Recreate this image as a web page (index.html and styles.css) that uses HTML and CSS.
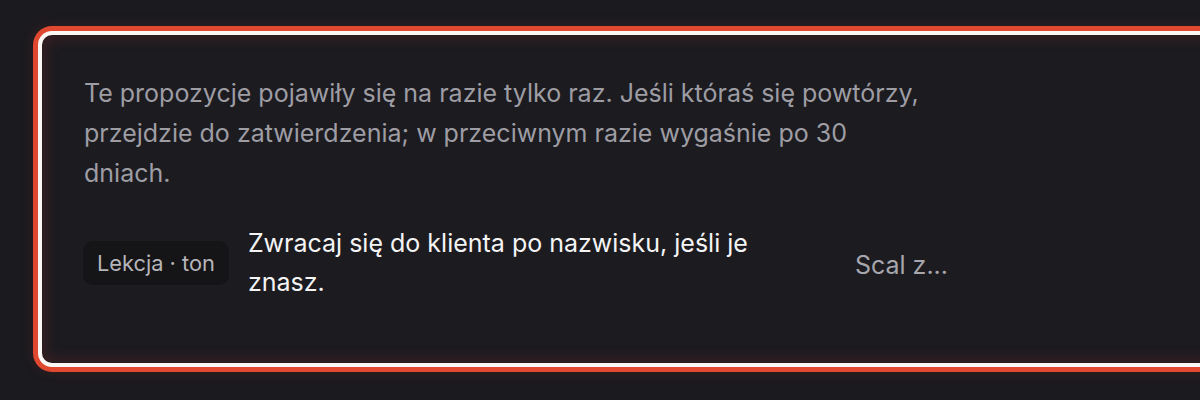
FILE: index.html
```html
<!DOCTYPE html>
<html lang="pl">
<head>
<meta charset="utf-8">
<title>Propozycje</title>
<link rel="stylesheet" href="styles.css">
</head>
<body>
<div class="page">
  <section class="card">
    <p class="intro">Te propozycje pojawiły się na razie tylko raz. Jeśli któraś się powtórzy, przejdzie do zatwierdzenia; w przeciwnym razie wygaśnie po 30 dniach.</p>
    <div class="row">
      <span class="badge">Lekcja · ton</span>
      <span class="lesson">Zwracaj się do klienta po nazwisku, jeśli je znasz.</span>
      <span class="merge">Scal z...</span>
    </div>
  </section>
</div>
</body>
</html>
```
FILE: styles.css
```css
html, body {
  margin: 0;
  padding: 0;
  background: #1b1a1f;
  overflow: hidden;
  width: 1200px;
  height: 400px;
}
body {
  font-family: Inter, "Noto Sans", sans-serif;
}
.page {
  padding: 36px 0 0 43px;
}
.card {
  box-sizing: border-box;
  width: 1220px;
  height: 326px;
  background: #1c1b20;
  border-radius: 9px;
  padding: 37px 40px 0 41px;
  box-shadow:
    0 0 0 1px #2a1a1a,
    0 0 0 5px #fbf7f5,
    0 0 0 10px #e0482f,
    0 0 14px 10px rgba(224, 72, 47, 0.12),
    inset 0 0 14px 2px rgba(120, 40, 40, 0.35);
}
.intro {
  margin: 0;
  max-width: 840px;
  font-size: 25px;
  line-height: 40px;
  color: #9e9da4;
}
.row {
  margin-top: 31px;
  display: flex;
  align-items: center;
}
.badge {
  flex: none;
  background: #151417;
  color: #b6b5ba;
  font-size: 21.8px;
  line-height: 44px;
  padding: 0 14px;
  border-radius: 10px;
  margin-left: -1px;
}
.lesson {
  flex: none;
  width: 560px;
  margin-left: 19px;
  color: #f4f4f5;
  font-size: 25px;
  line-height: 39px;
}
.merge {
  margin-left: 47px;
  margin-top: 5px;
  color: #a7a6ad;
  font-size: 25px;
  line-height: 39px;
}
```
